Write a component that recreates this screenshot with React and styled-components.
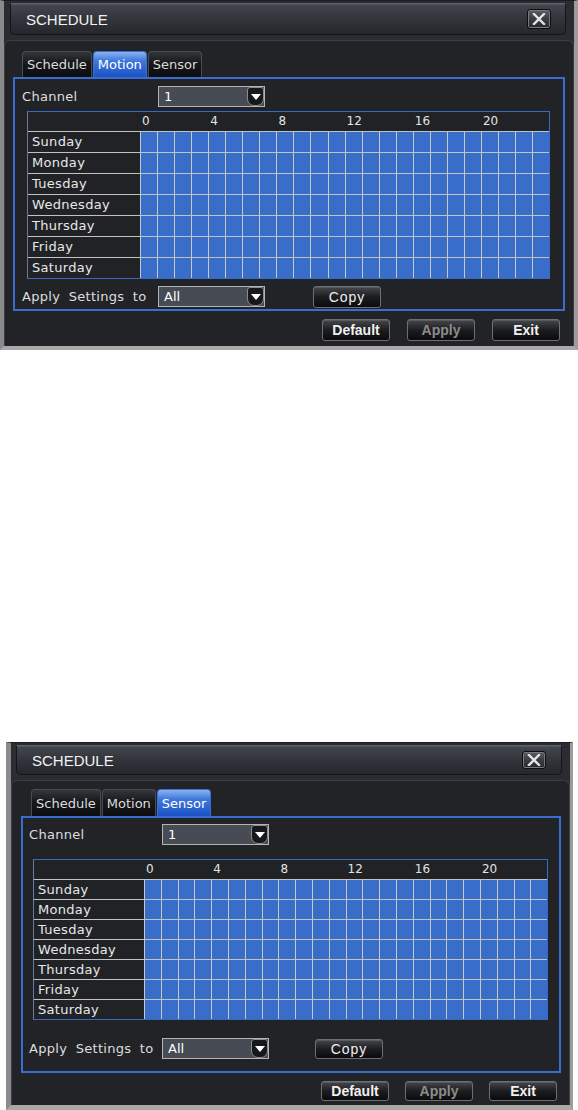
import React from 'react';
import styled, { createGlobalStyle } from 'styled-components';

const DAYS = ['Sunday', 'Monday', 'Tuesday', 'Wednesday', 'Thursday', 'Friday', 'Saturday'];
const TABS = ['Schedule', 'Motion', 'Sensor'];
const HOURS = Array.from({ length: 24 }, (_, i) => i);

// per-window metrics, the two captures are not quite the same scale
const TOP = {
    mt: 0, ml: 0, w: 578, h: 350,
    bl: 4, br: 4, bb: 4, pt: 2,
    titleH: 32, titleML: 6, titleMR: 8, closeMR: 14, closeH: 20,
    tabsTop: 10, tabsL: 9, tabH: 26, frameL: 8, frameR: 8,
    frameH: 234, framePL: 7, framePR: 13,
    chanTop: 7, selH: 21, labelW: 136,
    gridTop: 4, gridML: 5, headH: 19, dayH: 21, dayLabelW: 112,
    applyTop: 7, copyGap: 48,
    btnTop: 8, btnH: 22, btnMR: 5, btnGap: 17
};

const BOTTOM = {
    mt: 392, ml: 6, w: 567, h: 368,
    bl: 5, br: 3, bb: 5, pt: 2,
    titleH: 30, titleML: 5, titleMR: 8, closeMR: 15, closeH: 18,
    tabsTop: 8, tabsL: 10, tabH: 27, frameL: 9, frameR: 8,
    frameH: 257, framePL: 6, framePR: 11,
    chanTop: 6, selH: 21, labelW: 133,
    gridTop: 14, gridML: 4, headH: 19, dayH: 20, dayLabelW: 110,
    applyTop: 18, copyGap: 46,
    btnTop: 8, btnH: 20, btnMR: 4, btnGap: 16
};

const GlobalStyle = createGlobalStyle`
    html, body { margin: 0; padding: 0; background: #fff; }
    body { font-family: "DejaVu Sans", Verdana, sans-serif; }
    * { box-sizing: border-box; }
`;

const Page = styled.div`
    display: flex; flex-direction: column;
    width: 578px; height: 1110px;
    overflow: hidden;
`;

const Win = styled.div`
    display: flex; flex-direction: column;
    width: ${p => p.$m.w}px; height: ${p => p.$m.h}px;
    margin: ${p => p.$m.mt}px 0 0 ${p => p.$m.ml}px;
    padding-top: ${p => p.$m.pt}px;
    background: #2a2c31;
    border-style: solid;
    border-color: #1c1d20 #9c9c9c #a8a8a8 #8a8a8a;
    border-width: 1px ${p => p.$m.br}px ${p => p.$m.bb}px ${p => p.$m.bl}px;
    flex-shrink: 0;
`;

const TitleBar = styled.div`
    display: flex; align-items: center; justify-content: space-between;
    height: ${p => p.$m.titleH}px;
    margin: 0 ${p => p.$m.titleMR}px 0 ${p => p.$m.titleML}px;
    padding-left: 15px;
    background: linear-gradient(180deg, #44474f 0%, #33363d 45%, #25272c 100%);
    border: 1px solid #14151a;
    border-top-color: #5c5f67;
    border-radius: 0 0 5px 5px;
    box-shadow: inset 0 1px 0 rgba(255,255,255,.08);
`;

const Title = styled.span`
    font-family: "Liberation Sans", Arial, sans-serif;
    font-size: 15px;
    color: #f2f2f2;
`;

const CloseBtn = styled.div`
    display: flex; justify-content: center; align-items: center;
    width: 24px; height: ${p => p.$m.closeH}px;
    margin-right: ${p => p.$m.closeMR}px;
    border: 1px solid #0c0c0e;
    border-radius: 3px;
    background: linear-gradient(180deg, #5a5d64 0%, #3a3c42 50%, #26282c 100%);
    box-shadow: inset 0 0 0 1px #777a80;
`;

const Body = styled.div`
    flex: 1;
    display: flex; flex-direction: column;
    margin-top: 5px;
    padding: ${p => p.$m.tabsTop}px ${p => p.$m.frameR}px 0 ${p => p.$m.frameL}px;
    background: #212327;
    border: 1px solid #3c3e44;
    border-bottom: none;
    border-radius: 6px 6px 0 0;
`;

const Tabs = styled.div`
    display: flex; gap: 1px;
    margin-left: ${p => p.$m.tabsL}px;
    height: ${p => p.$m.tabH}px;
`;

const Tab = styled.div`
    display: flex; align-items: center;
    padding: 0 4px;
    height: 100%;
    font-size: 13px;
    color: ${p => p.$active ? '#fff' : '#dcdcdc'};
    border: 1px solid ${p => p.$active ? '#3c6fd4' : '#4a4c52'};
    border-bottom: none;
    border-radius: 4px 4px 0 0;
    background: ${p => p.$active
        ? 'linear-gradient(180deg, #8ab4f0 0%, #3f78dc 35%, #1b52c6 100%)'
        : 'linear-gradient(180deg, #34363b 0%, #17181b 45%, #0c0d0f 100%)'};
`;

const GroupBox = styled.div`
    display: flex; flex-direction: column;
    height: ${p => p.$m.frameH}px;
    padding: 0 ${p => p.$m.framePR}px 0 ${p => p.$m.framePL}px;
    border: 2px solid #3a6dd3;
`;

const FieldRow = styled.div`
    display: flex; align-items: center;
    height: ${p => p.$m.selH}px;
    margin-top: ${p => p.$top}px;
`;

const FieldLabel = styled.span`
    width: ${p => p.$m.labelW}px;
    font-size: 13px;
    letter-spacing: .3px;
    word-spacing: ${p => p.$wide ? 4 : 0}px;
    color: #dedede;
`;

const SelectBox = styled.div`
    display: flex; align-items: center; justify-content: space-between;
    width: 107px; height: ${p => p.$m.selH}px;
    padding-left: 5px;
    background: #464b54;
    border: 1px solid #b4b4b4;
`;

const SelectValue = styled.span`
    font-size: 13px;
    color: #fff;
`;

const ArrowBtn = styled.div`
    display: flex; justify-content: center; align-items: center;
    width: 17px; height: 100%;
    background: #17181a;
    border: 1px solid #8c8c8c;
    border-radius: 3px 3px 7px 7px;
`;

const Grid = styled.div`
    display: flex; flex-direction: column;
    margin: ${p => p.$m.gridTop}px 0 0 ${p => p.$m.gridML}px;
    border: 1px solid #3a69c4;
    border-left-color: #6a7c9e;
    background: #202226;
`;

const HeadRow = styled.div`
    display: flex;
    height: ${p => p.$m.headH}px;
`;

const HourCell = styled.div`
    flex: 1;
    width: 0;
    padding-left: 2px;
    font-size: 12px;
    line-height: 18px;
    color: #e4e4e4;
    white-space: nowrap;
    overflow: visible;
`;

const DayRow = styled.div`
    display: flex;
    height: ${p => p.$m.dayH}px;
    border-top: 1px solid #c2c2c2;
`;

const DayLabel = styled.div`
    width: ${p => p.$m.dayLabelW}px;
    flex-shrink: 0;
    padding-left: 4px;
    font-size: 13px;
    letter-spacing: .3px;
    line-height: ${p => p.$m.dayH - 1}px;
    color: #e8e8e8;
`;

const Slot = styled.div`
    flex: 1;
    width: 0;
    background: #386dca;
    border-left: 1px solid #c6c8cc;
`;

const Footer = styled.div`
    display: flex; justify-content: flex-end; gap: ${p => p.$m.btnGap}px;
    margin: ${p => p.$m.btnTop}px ${p => p.$m.btnMR}px 0 0;
`;

const ActionBtn = styled.div`
    display: flex; justify-content: center; align-items: center;
    width: 68px; height: ${p => p.$m.btnH}px;
    font-family: "Liberation Sans", Arial, sans-serif;
    font-size: 14px;
    font-weight: bold;
    color: ${p => p.$disabled ? '#8c8c8c' : '#f0f0f0'};
    background: linear-gradient(180deg, #45474c 0%, #1c1d20 50%, #0b0b0c 100%);
    border: 1px solid #6e6f73;
    border-radius: 3px;
    box-shadow: inset 0 1px 0 rgba(255,255,255,.12);
`;

const CopyBtn = styled(ActionBtn)`
    margin-left: ${p => p.$m.copyGap}px;
    font-weight: normal;
    letter-spacing: 1px;
`;

function CloseIcon() {
    return (
        <svg width="14" height="12" viewBox="0 0 14 12">
            <path d="M2 1 L12 11 M12 1 L2 11" stroke="#e4e4e4" strokeWidth="2.4" strokeLinecap="square" />
        </svg>
    )
}

function Select({ m, value }) {
    return (
        <SelectBox $m={m}>
            <SelectValue>{value}</SelectValue>
            <ArrowBtn>
                <svg width="10" height="6" viewBox="0 0 10 6">
                    <path d="M0 0 H10 L5 6 Z" fill="#fff" />
                </svg>
            </ArrowBtn>
        </SelectBox>
    )
}

function ScheduleWindow({ m, active }) {
    return (
        <Win $m={m}>
            <TitleBar $m={m}>
                <Title>SCHEDULE</Title>
                <CloseBtn $m={m}><CloseIcon /></CloseBtn>
            </TitleBar>
            <Body $m={m}>
                <Tabs $m={m}>
                    {TABS.map(t => <Tab key={t} $m={m} $active={t === active}>{t}</Tab>)}
                </Tabs>
                <GroupBox $m={m}>
                    <FieldRow $m={m} $top={m.chanTop}>
                        <FieldLabel $m={m}>Channel</FieldLabel>
                        <Select m={m} value="1" />
                    </FieldRow>
                    <Grid $m={m}>
                        <HeadRow $m={m}>
                            <DayLabel $m={m} />
                            {HOURS.map(h => <HourCell key={h}>{h % 4 === 0 ? h : ''}</HourCell>)}
                        </HeadRow>
                        {DAYS.map(d => (
                            <DayRow key={d} $m={m}>
                                <DayLabel $m={m}>{d}</DayLabel>
                                {HOURS.map(h => <Slot key={h} />)}
                            </DayRow>
                        ))}
                    </Grid>
                    <FieldRow $m={m} $top={m.applyTop}>
                        <FieldLabel $m={m} $wide>Apply Settings to</FieldLabel>
                        <Select m={m} value="All" />
                        <CopyBtn $m={m}>Copy</CopyBtn>
                    </FieldRow>
                </GroupBox>
                <Footer $m={m}>
                    <ActionBtn $m={m}>Default</ActionBtn>
                    <ActionBtn $m={m} $disabled>Apply</ActionBtn>
                    <ActionBtn $m={m}>Exit</ActionBtn>
                </Footer>
            </Body>
        </Win>
    )
}

export default function App() {
    return (
        <>
            <GlobalStyle />
            <Page>
                <ScheduleWindow m={TOP} active="Motion" />
                <ScheduleWindow m={BOTTOM} active="Sensor" />
            </Page>
        </>
    )
}
